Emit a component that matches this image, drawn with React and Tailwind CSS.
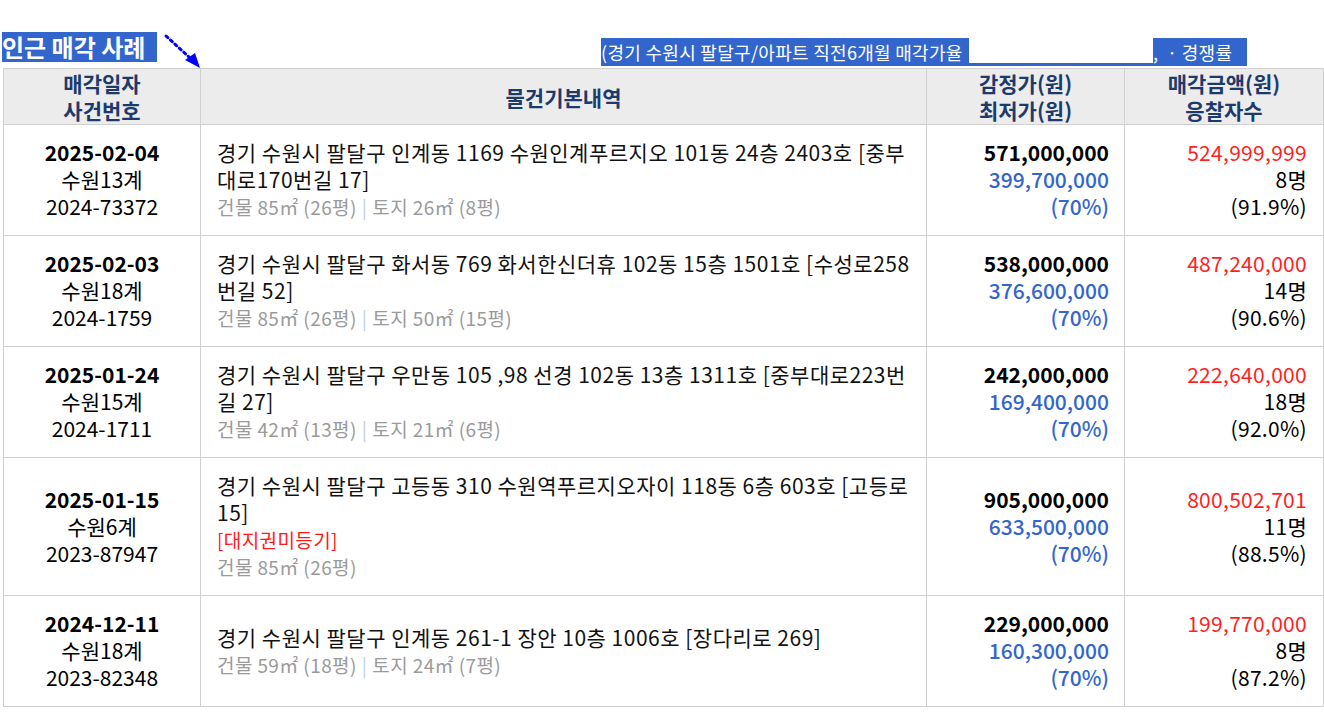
import React from 'react';

const rows = [
  {
    date: '2025-02-04', court: '수원13계', caseNo: '2024-73372',
    addr: '경기 수원시 팔달구 인계동 1169 수원인계푸르지오 101동 24층 2403호 [중부대로170번길 17]',
    note: null,
    area: ['건물 85㎡ (26평)', '토지 26㎡ (8평)'],
    appraisal: '571,000,000', minimum: '399,700,000', minRate: '(70%)',
    sold: '524,999,999', bidders: '8명', soldRate: '(91.9%)',
  },
  {
    date: '2025-02-03', court: '수원18계', caseNo: '2024-1759',
    addr: '경기 수원시 팔달구 화서동 769 화서한신더휴 102동 15층 1501호 [수성로258번길 52]',
    note: null,
    area: ['건물 85㎡ (26평)', '토지 50㎡ (15평)'],
    appraisal: '538,000,000', minimum: '376,600,000', minRate: '(70%)',
    sold: '487,240,000', bidders: '14명', soldRate: '(90.6%)',
  },
  {
    date: '2025-01-24', court: '수원15계', caseNo: '2024-1711',
    addr: '경기 수원시 팔달구 우만동 105 ,98 선경 102동 13층 1311호 [중부대로223번길 27]',
    note: null,
    area: ['건물 42㎡ (13평)', '토지 21㎡ (6평)'],
    appraisal: '242,000,000', minimum: '169,400,000', minRate: '(70%)',
    sold: '222,640,000', bidders: '18명', soldRate: '(92.0%)',
  },
  {
    date: '2025-01-15', court: '수원6계', caseNo: '2023-87947',
    addr: '경기 수원시 팔달구 고등동 310 수원역푸르지오자이 118동 6층 603호 [고등로15]',
    note: '[대지권미등기]',
    area: ['건물 85㎡ (26평)'],
    appraisal: '905,000,000', minimum: '633,500,000', minRate: '(70%)',
    sold: '800,502,701', bidders: '11명', soldRate: '(88.5%)',
  },
  {
    date: '2024-12-11', court: '수원18계', caseNo: '2023-82348',
    addr: '경기 수원시 팔달구 인계동 261-1 장안 10층 1006호 [장다리로 269]',
    note: null,
    area: ['건물 59㎡ (18평)', '토지 24㎡ (7평)'],
    appraisal: '229,000,000', minimum: '160,300,000', minRate: '(70%)',
    sold: '199,770,000', bidders: '8명', soldRate: '(87.2%)',
  },
];

const font = { fontFamily: '"Noto Sans CJK KR", "Noto Sans", sans-serif' };

export default function App() {
  return (
    <div className="w-[1324px] h-[716px] bg-white overflow-hidden text-black" style={font}>
      {/* heading line */}
      <div className="flex items-start h-[68px]">
        <div className="ml-[2px] mt-[32px] h-[30px] w-[155px] bg-[#3366cc] text-white text-[24px] font-semibold leading-[30px] whitespace-nowrap">
          인근 매각 사례
        </div>
        <svg className="ml-[6px] mt-[32px]" width="38" height="37" viewBox="0 0 38 37">
          <line x1="3" y1="4" x2="26" y2="25" stroke="#0000ff" strokeWidth="3" strokeDasharray="2.5 3.5" strokeLinecap="round" />
          <polygon points="22,28 32,21 37,36" fill="#0000ff" />
        </svg>
        <div className="ml-[400px] mt-[38px] flex h-[28px] text-[18px] tracking-[0.3px] leading-[28px] whitespace-nowrap text-white">
          <span className="bg-[#3366cc] w-[368px]">(경기 수원시 팔달구/아파트 직전6개월 매각가율</span>
          <span className="w-[184px] bg-white border-b-[3px] border-[#3366cc]"></span>
          <span className="bg-[#3366cc] w-[94px]">,&nbsp;&nbsp;·&nbsp;경쟁률</span>
        </div>
      </div>

      {/* table */}
      <table className="ml-[3px] w-[1320px] table-fixed border-collapse text-[21px] leading-[27px]">
        <colgroup>
          <col className="w-[197px]" />
          <col className="w-[726px]" />
          <col className="w-[198px]" />
          <col className="w-[199px]" />
        </colgroup>
        <thead>
          <tr className="bg-[#ececec] text-[#1d3a6c]">
            <th className="border border-[#d0d0d0] pt-px font-bold">매각일자<br />사건번호</th>
            <th className="border border-[#d0d0d0] pt-px font-bold">물건기본내역</th>
            <th className="border border-[#d0d0d0] pt-px font-bold">감정가(원)<br />최저가(원)</th>
            <th className="border border-[#d0d0d0] pt-px font-bold">매각금액(원)<br />응찰자수</th>
          </tr>
        </thead>
        <tbody>
          {rows.map((r) => (
            <tr key={r.caseNo}>
              <td className="border border-[#d0d0d0] pt-[14px] pb-[15px] text-center align-middle">
                <div className="font-bold">{r.date}</div>
                <div>{r.court}</div>
                <div>{r.caseNo}</div>
              </td>
              <td className="border border-[#d0d0d0] pt-[14px] pb-[15px] pl-[16px] pr-[14px] align-middle">
                <div className="text-[#111] tracking-[0.5px]">{r.addr}</div>
                {r.note && <div className="text-[#ff1a1a] text-[19px] tracking-[0.4px]">{r.note}</div>}
                <div className="text-[#9a9a9a] text-[19px] tracking-[0.4px]">
                  {r.area[0]}
                  {r.area[1] && (
                    <>
                      <span className="text-[#c3cfdc] mx-[5px]">|</span>
                      {r.area[1]}
                    </>
                  )}
                </div>
              </td>
              <td className="border border-[#d0d0d0] pt-[14px] pb-[15px] pr-[15px] text-right align-middle">
                <div className="font-bold">{r.appraisal}</div>
                <div className="text-[#3366cc] font-medium">{r.minimum}</div>
                <div className="text-[#3366cc] font-medium">{r.minRate}</div>
              </td>
              <td className="border border-[#d0d0d0] pt-[14px] pb-[15px] pr-[16px] text-right align-middle tracking-[0.3px]">
                <div className="text-[#ff1f1f]">{r.sold}</div>
                <div>{r.bidders}</div>
                <div>{r.soldRate}</div>
              </td>
            </tr>
          ))}
        </tbody>
      </table>
    </div>
  );
}
